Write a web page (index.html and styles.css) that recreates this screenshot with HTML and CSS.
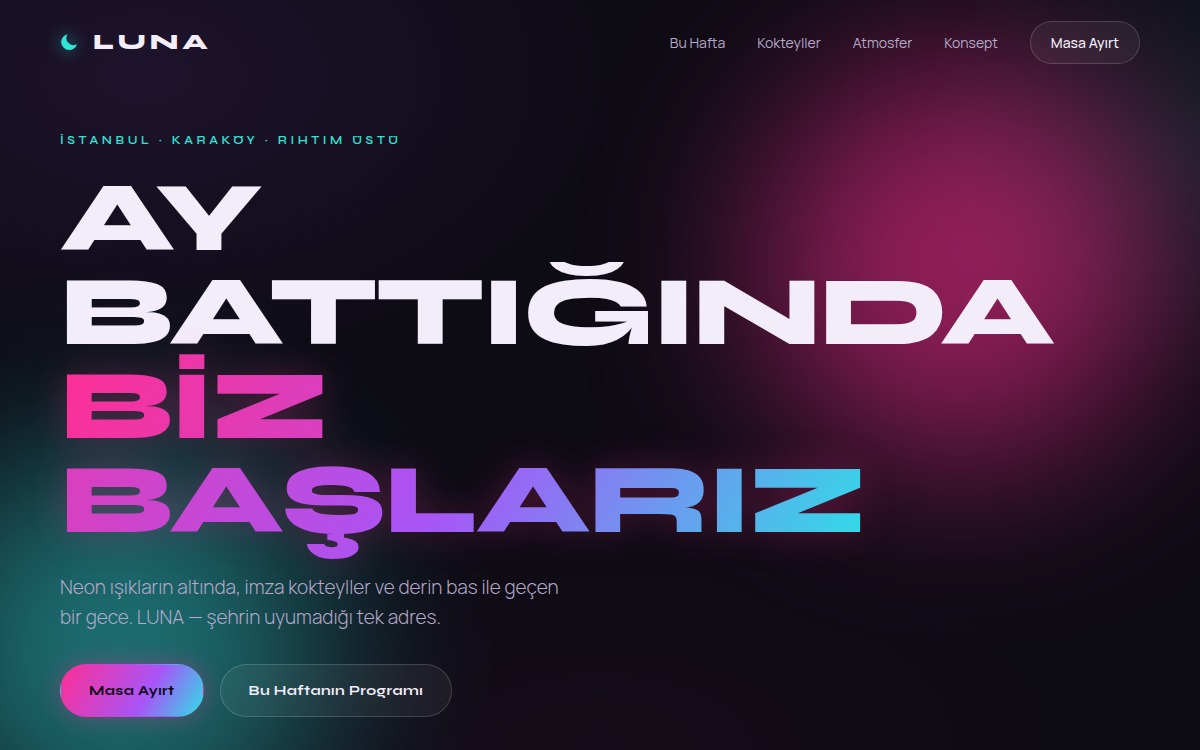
FILE: index.html
```html
<!DOCTYPE html>
<html lang="tr">
<head>
  <meta charset="UTF-8">
  <meta name="viewport" content="width=device-width, initial-scale=1.0">
  <title>LUNA — Karaköy</title>
  <link rel="stylesheet" href="styles.css">
</head>
<body>
  <div class="page">
    <div class="blob blob-pink" aria-hidden="true"></div>
    <div class="blob blob-cyan" aria-hidden="true"></div>

    <header class="nav">
      <a class="logo" href="#">
        <svg class="moon" viewBox="0 0 18 18" aria-hidden="true">
          <path d="M7.6 1.2A8 8 0 1 0 17 10.9A6.9 6.9 0 0 1 7.6 1.2Z" fill="#2ee6d6"/>
        </svg>
        <span>LUNA</span>
      </a>
      <nav class="links">
        <a href="#hafta">Bu Hafta</a>
        <a href="#kokteyller">Kokteyller</a>
        <a href="#atmosfer">Atmosfer</a>
        <a href="#konsept">Konsept</a>
        <a class="nav-cta" href="#rezervasyon">Masa Ayırt</a>
      </nav>
    </header>

    <main class="hero">
      <p class="eyebrow">İSTANBUL · KARAKÖY · RIHTIM ÜSTÜ</p>
      <h1 class="title">AY BATTIĞINDA<br><span class="grad">BİZ BAŞLARIZ</span></h1>
      <p class="lede">Neon ışıkların altında, imza kokteyller ve derin bas ile geçen bir gece. LUNA — şehrin uyumadığı tek adres.</p>
      <div class="actions">
        <a class="btn btn-primary" href="#rezervasyon">Masa Ayırt</a>
        <a class="btn btn-ghost" href="#hafta">Bu Haftanın Programı</a>
      </div>
    </main>
  </div>
</body>
</html>
```
FILE: styles.css
```css
:root {
  --bg: #0d0b14;
  --text: #f3edfa;
  --muted: #b5a9c9;
  --pink: #ff2e93;
  --violet: #a855f7;
  --cyan: #2ee6d6;
  --line: rgba(255, 255, 255, 0.16);
  --glass: rgba(255, 255, 255, 0.05);
  --grad: linear-gradient(120deg, var(--pink), var(--violet) 60%, #2edfe6);
  --display: 'Syne', 'DejaVu Sans', sans-serif;
  --sans: 'Manrope', 'Inter', sans-serif;
}

* {
  margin: 0;
  padding: 0;
  box-sizing: border-box;
}

body {
  font-family: var(--sans);
  background: var(--bg);
  color: var(--text);
}

a {
  color: inherit;
  text-decoration: none;
}

.page {
  position: relative;
  min-height: 100vh;
  overflow: hidden;
  background:
    radial-gradient(ellipse 50% 50% at 12% 10%, rgba(168, 85, 247, 0.11), transparent 80%),
    radial-gradient(ellipse 30% 40% at 100% 20%, rgba(46, 230, 214, 0.09), transparent 80%),
    radial-gradient(ellipse 50% 40% at 50% 100%, rgba(255, 46, 147, 0.04), transparent 80%),
    var(--bg);
}

/* glow */
.blob {
  position: absolute;
  border-radius: 50%;
  filter: blur(90px);
}

.blob-pink {
  top: 62px;
  right: 40px;
  width: 400px;
  height: 400px;
  background: var(--pink);
  opacity: 0.56;
}

.blob-cyan {
  bottom: -100px;
  left: -80px;
  width: 400px;
  height: 400px;
  background: #2ee0dc;
  opacity: 0.48;
}

/* header */
.nav {
  position: relative;
  display: flex;
  align-items: center;
  justify-content: space-between;
  padding: 21px 60px;
}

.logo {
  display: flex;
  align-items: center;
  gap: 15px;
  padding-bottom: 2px;
  font-family: var(--display);
  font-size: 22px;
  font-weight: 800;
  line-height: 24px;
  letter-spacing: 0.18em;
}

.moon {
  width: 18px;
  height: 18px;
  filter: drop-shadow(0 0 8px rgba(46, 230, 214, 0.6));
}

.links {
  display: flex;
  align-items: center;
  gap: 32px;
  font-size: 14px;
  color: var(--muted);
}

.nav-cta {
  padding: 12px 20px;
  line-height: 17px;
  color: var(--text);
  font-weight: 500;
  background: var(--glass);
  border: 1px solid var(--line);
  border-radius: 999px;
}

/* hero */
.hero {
  position: relative;
  padding: 48px 60px 32px;
}

.eyebrow {
  font-family: var(--display);
  font-size: 12px;
  font-weight: 600;
  line-height: 14px;
  letter-spacing: 0.3em;
  color: var(--cyan);
}

.title {
  margin-top: 24px;
  font-family: var(--display);
  font-size: 99px;
  font-weight: 800;
  line-height: 94px;
  letter-spacing: -0.02em;
}

.grad {
  background: var(--grad);
  -webkit-background-clip: text;
  background-clip: text;
  color: transparent;
  filter: drop-shadow(0 0 18px rgba(255, 46, 147, 0.25));
}

.lede {
  max-width: 500px;
  margin-top: 25px;
  font-size: 19px;
  font-weight: 300;
  line-height: 30px;
  color: var(--muted);
}

.actions {
  display: flex;
  flex-wrap: wrap;
  gap: 16px;
  margin-top: 32px;
}

.btn {
  padding: 16px 28px;
  font-family: var(--display);
  font-size: 14px;
  font-weight: 700;
  line-height: 19px;
  letter-spacing: 0.03em;
  border: 1px solid transparent;
  border-radius: 999px;
}

.btn-primary {
  background: var(--grad);
  color: #0a0912;
  box-shadow: 0 0 24px rgba(255, 46, 147, 0.35);
}

.btn-ghost {
  background: var(--glass);
  border-color: var(--line);
}
```
